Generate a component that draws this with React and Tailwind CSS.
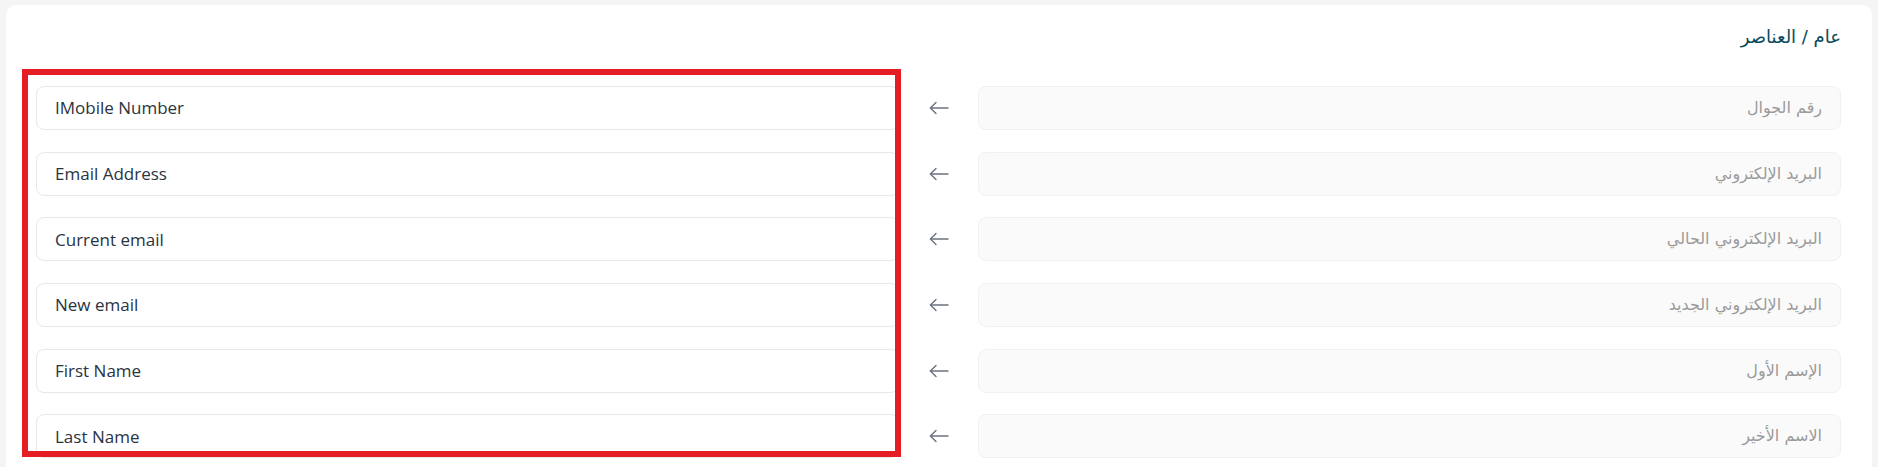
const fields = [
  { en: 'IMobile Number', ar: 'رقم الجوال' },
  { en: 'Email Address', ar: 'البريد الإلكتروني' },
  { en: 'Current email', ar: 'البريد الإلكتروني الحالي' },
  { en: 'New email', ar: 'البريد الإلكتروني الجديد' },
  { en: 'First Name', ar: 'الإسم الأول' },
  { en: 'Last Name', ar: 'الاسم الأخير' },
];

const ArrowIcon = () => (
  <svg width="20" height="14" viewBox="0 0 20 14" fill="none" stroke="#6b7280" strokeWidth="1.4" strokeLinecap="round" strokeLinejoin="round">
    <path d="M19 7H1.5" />
    <path d="M7 1.4L1.4 7L7 12.6" />
  </svg>
);

export default function App() {
  return (
    <div className="relative h-[467px] overflow-hidden bg-[#f5f5f5] px-[6px] pt-[5px]">
      <div className="h-[600px] rounded-[10px] bg-white pl-[30px] pr-[31px] pt-[20px]" style={{ fontFamily: '"Open Sans", sans-serif' }}>
        <div dir="rtl" className="text-[18px] leading-[24px] text-[#0b4a5c]" style={{ fontFamily: '"DejaVu Sans", sans-serif' }}>
          عام / العناصر
        </div>

        <div className="mt-[37px] flex flex-col gap-[21.7px]">
          {fields.map((f) => (
            <div key={f.en} className="flex items-center">
              <div className="flex h-[44px] flex-1 items-center rounded-[8px] border border-[#e8e8e8] bg-white px-[18px] text-[17px] text-[#2a3340]">
                {f.en}
              </div>
              <div className="flex w-[79px] shrink-0 items-center justify-center">
                <ArrowIcon />
              </div>
              <div
                dir="rtl"
                className="flex h-[44px] flex-1 items-center rounded-[8px] border border-[#f1f1f1] bg-[#fafafa] px-[18px] text-[16px] text-[#9a9a9a]"
                style={{ fontFamily: '"DejaVu Sans", sans-serif' }}
              >
                {f.ar}
              </div>
            </div>
          ))}
        </div>
      </div>

      <div className="pointer-events-none absolute left-[22px] top-[69px] h-[388px] w-[879px] border-[6px] border-[#e41e24]" />
    </div>
  );
}
